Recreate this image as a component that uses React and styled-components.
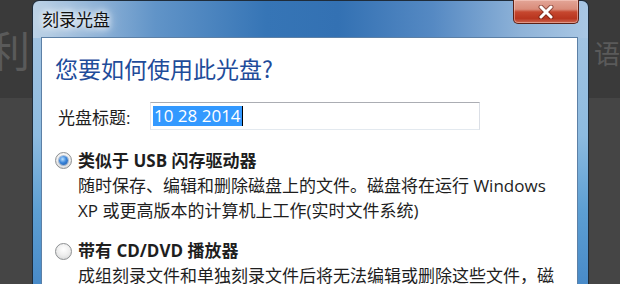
import React from 'react';
import styled, { createGlobalStyle } from 'styled-components';

const GlobalStyle = createGlobalStyle`
  html, body {
    margin: 0;
    padding: 0;
    background: #3f3f3f;
  }
`;

const Screen = styled.div`
  display: flex;
  width: 620px;
  height: 284px;
  overflow: hidden;
  background: linear-gradient(180deg, #3a3a3a 0, #3a3a3a 98px, #454545 98px);
  font-family: "Open Sans", "Noto Sans CJK SC", sans-serif;
`;

const Backdrop = styled.div`
  flex: ${p => (p.$grow ? '1' : 'none')};
  width: ${p => p.$width}px;
  padding-top: ${p => p.$top}px;
  padding-left: ${p => p.$left}px;
  overflow: hidden;
  color: #5a5a5a;
  font-family: "Noto Sans CJK SC", sans-serif;
  font-size: ${p => p.$size}px;
  line-height: 1;
  white-space: nowrap;
`;

const Window = styled.div`
  flex: none;
  display: flex;
  flex-direction: column;
  width: 557px;
  height: 300px;
  box-sizing: border-box;
  padding: 0 10px 0 8px;
  border: 1px solid #1f2c3a;
  border-bottom: none;
  border-radius: 7px 7px 0 0;
  background:
    linear-gradient(90deg, #bcd2e6 0%, #9dbcdc 8%, #6194c8 22%, #3675b6 42%, #3371b3 55%, #5589c3 72%, #8fb3d8 88%, #a9c7e4 100%) top / 100% 37px no-repeat,
    linear-gradient(180deg, #a9c6e2 0%, #8dbbe0 45%, #5d9fd3 70%, #4486c6 100%);
`;

const TitleBar = styled.div`
  display: flex;
  justify-content: space-between;
  align-items: flex-start;
  height: 36px;
  flex: none;
`;

const Title = styled.div`
  padding: 7px 0 0 1px;
  font-family: "Noto Sans CJK SC", sans-serif;
  font-size: 17px;
  line-height: 22px;
  color: #111;
  text-shadow: 0 0 6px #fff, 0 0 10px rgba(255, 255, 255, 0.9), 0 0 14px rgba(255, 255, 255, 0.7);
`;

const CloseButton = styled.div`
  display: flex;
  align-items: center;
  justify-content: center;
  width: 66px;
  height: 24px;
  margin: -1px -1px 0 0;
  box-sizing: border-box;
  border: 1px solid #5b2015;
  border-top: none;
  border-radius: 0 0 5px 5px;
  background: linear-gradient(180deg, #e3a597 0%, #d98c7a 40%, #c6472f 52%, #b8351f 80%, #cc6650 100%);
  box-shadow: inset 0 0 0 1px rgba(255, 220, 210, 0.45);
`;

const Client = styled.div`
  flex: 1;
  background: #fff;
  border: 1px solid #5c80a6;
  border-bottom: none;
  padding: 15px 14px 0 13px;
  color: #1e1e1e;
`;

const Heading = styled.h1`
  margin: 0;
  font-family: "Noto Sans CJK SC", sans-serif;
  font-weight: normal;
  font-size: 23px;
  line-height: 30px;
  color: #1f4c9a;
`;

const FieldRow = styled.div`
  display: flex;
  align-items: center;
  height: 28px;
  margin-top: 19px;
`;

const FieldLabel = styled.div`
  width: 95px;
  padding-left: 3px;
  box-sizing: border-box;
  font-size: 17px;
`;

const TextBox = styled.div`
  display: flex;
  align-items: center;
  width: 330px;
  height: 28px;
  box-sizing: border-box;
  padding-left: 2px;
  border: 1px solid;
  border-color: #abadb3 #dbdfe6 #e3e9ef #e2e3ea;
  font-size: 17px;
`;

const Selection = styled.span`
  background: #3399ff;
  color: #fff;
  line-height: 20px;
  padding: 0 1px;
`;

const Caret = styled.span`
  width: 0;
  height: 20px;
  border-right: 1px solid #000;
`;

const Option = styled.div`
  display: grid;
  grid-template-columns: 17px 1fr;
  column-gap: 6px;
  margin-top: ${p => p.$gap}px;
  font-size: 17px;
  line-height: 25px;
  white-space: nowrap;
`;

const Radio = styled.div`
  display: flex;
  align-items: center;
  justify-content: center;
  width: 17px;
  height: 17px;
  margin-top: ${p => p.$offset}px;
  box-sizing: border-box;
  border-radius: 50%;
  border: 1px solid #8d9092;
  background: radial-gradient(circle at 50% 35%, #ffffff 0%, #eeeeee 50%, #cfd0d1 100%);

  &::after {
    content: '';
    display: ${p => (p.$checked ? 'block' : 'none')};
    width: 9px;
    height: 9px;
    border-radius: 50%;
    background: radial-gradient(circle at 40% 35%, #b9e0ff 0%, #3b86db 45%, #17519f 100%);
    box-shadow: 0 0 0 1px rgba(30, 80, 150, 0.35);
  }
`;

const OptionTitle = styled.div`
  font-weight: bold;
`;

const OptionText = styled.div`
  grid-column: 2;
`;

const CloseGlyph = () => (
  <svg width="18" height="14" viewBox="0 0 18 14">
    <path d="M4 2 L14 12 M14 2 L4 12" stroke="#5a1a10" strokeWidth="5" strokeLinecap="round" opacity="0.55" />
    <path d="M4 2 L14 12 M14 2 L4 12" stroke="#ffffff" strokeWidth="3" strokeLinecap="round" />
  </svg>
);

const App = () => (
  <>
    <GlobalStyle />
    <Screen>
      <Backdrop $width={32} $top={28} $left={0} $size={42}>
        <span style={{ marginLeft: -12 }}>利</span>
      </Backdrop>
      <Window>
        <TitleBar>
          <Title>刻录光盘</Title>
          <CloseButton><CloseGlyph /></CloseButton>
        </TitleBar>
        <Client>
          <Heading>您要如何使用此光盘?</Heading>
          <FieldRow>
            <FieldLabel>光盘标题:</FieldLabel>
            <TextBox>
              <Selection>10 28 2014</Selection>
              <Caret />
            </TextBox>
          </FieldRow>
          <Option $gap={18}>
            <Radio $checked $offset={4} />
            <OptionTitle>类似于 USB 闪存驱动器</OptionTitle>
            <OptionText>
              随时保存、编辑和删除磁盘上的文件。磁盘将在运行 Windows<br />
              XP 或更高版本的计算机上工作(实时文件系统)
            </OptionText>
          </Option>
          <Option $gap={15}>
            <Radio $offset={5} />
            <OptionTitle>带有 CD/DVD 播放器</OptionTitle>
            <OptionText>成组刻录文件和单独刻录文件后将无法编辑或删除这些文件，磁</OptionText>
          </Option>
        </Client>
      </Window>
      <Backdrop $grow $top={40} $left={5} $size={26}>语</Backdrop>
    </Screen>
  </>
);

export default App;
